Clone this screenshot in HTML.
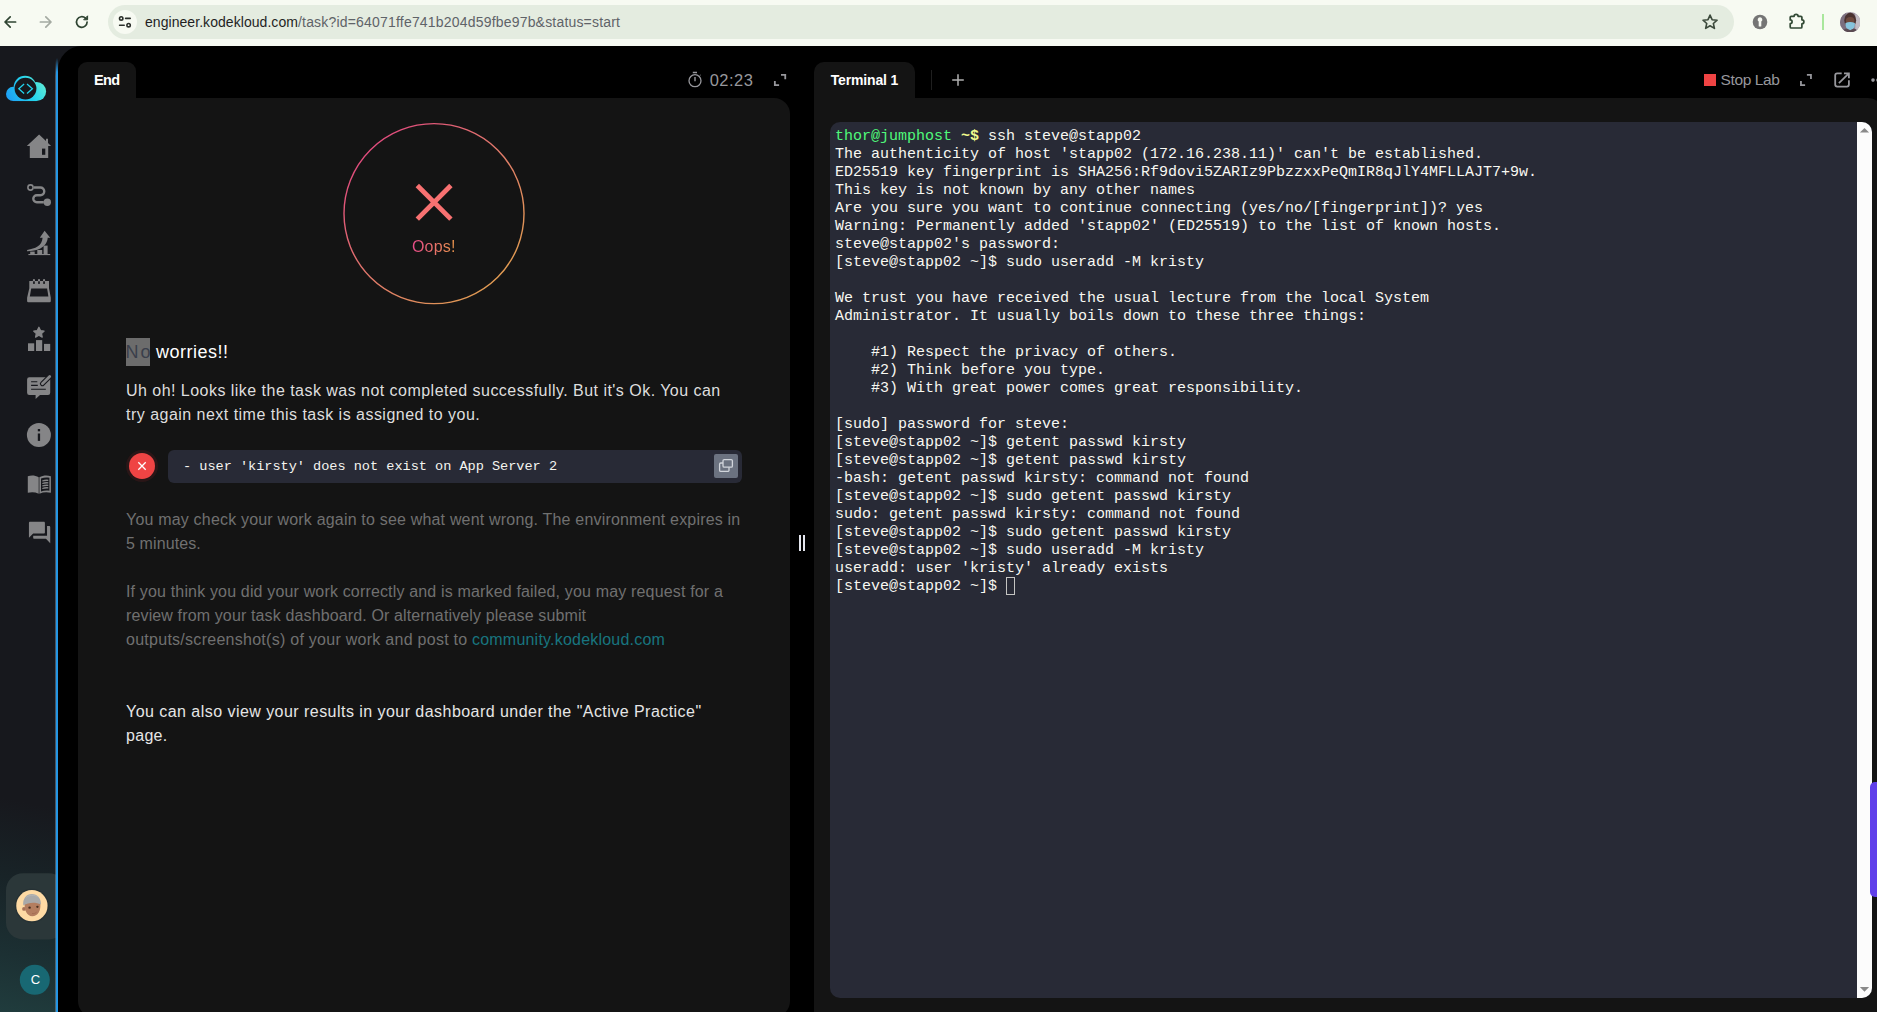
<!DOCTYPE html>
<html>
<head>
<meta charset="utf-8">
<style>
*{box-sizing:border-box;margin:0;padding:0}
html,body{width:1877px;height:1012px;overflow:hidden;background:#000;font-family:"Liberation Sans",sans-serif;}
.abs{position:absolute}
#top{position:absolute;left:0;top:0;width:1877px;height:46px;background:#f7faf2}
#url{position:absolute;left:108px;top:5px;width:1626px;height:34px;border-radius:17px;background:#e4ece0}
#url .ic{position:absolute;left:5px;top:5px;width:24px;height:24px;border-radius:12px;background:#f7faf2}
#urltxt{position:absolute;left:145px;top:14px;font-size:14px;line-height:17px;color:#1f1f1f;white-space:nowrap;letter-spacing:0.055px}
#urltxt span{color:#5f6368;letter-spacing:0.19px}
#side{position:absolute;left:0;top:46px;width:58px;height:966px;background:linear-gradient(192deg,#17181d 0%,#17181d 78%,#182327 86%,#1c3033 94%,#203c3d 100%)}
#main{position:absolute;left:58px;top:46px;width:1819px;height:966px;background:#000;border-top-left-radius:24px}
#blue{position:absolute;left:56px;top:58px;width:2px;height:954px;background:linear-gradient(180deg,rgba(36,150,228,0) 0,#2496e4 14px,#2496e4 100%)}
#lpanel{position:absolute;left:78px;top:98px;width:712px;height:919px;background:#141414;border-radius:0 16px 16px 16px}
#ltab{position:absolute;left:78px;top:62px;width:58px;height:37px;background:#141414;border-radius:9px 9px 0 0}
#ltab span{position:absolute;left:16px;top:9px;font-weight:bold;font-size:14.5px;letter-spacing:-0.67px;line-height:18px;color:#fff}
#rpanel{position:absolute;left:814px;top:98px;width:1070px;height:914px;background:#141414;border-radius:0 16px 0 0}
#rtab{position:absolute;left:814px;top:62px;width:101px;height:37px;background:#141414;border-radius:10px 10px 0 0}
#rtab span{position:absolute;left:16.700px;top:9px;letter-spacing:-0.15px;font-weight:bold;font-size:14px;line-height:18px;color:#fff;white-space:nowrap}
#term{position:absolute;left:830px;top:122px;width:1042px;height:876px;background:#282a36;border-radius:10px;overflow:hidden}
#term pre{position:absolute;left:5px;top:6px;font-family:"Liberation Mono",monospace;font-size:15px;line-height:18px;color:#f8f8f2}
#sb{position:absolute;left:1027px;top:0;width:15px;height:876px;background:#fcfcfc}
.g{color:#50fa7b}.y{color:#f1fa8c;font-weight:bold}
.p{position:absolute;left:126px;white-space:nowrap;font-size:16px;line-height:24px}
</style>
</head>
<body>
<div id="wrap" style="position:absolute;left:0;top:0;width:1877px;height:1012px;overflow:hidden">
<div id="top">
  <div id="url"><div class="ic"></div></div>
  <div id="urltxt">engineer.kodekloud.com<span>/task?id=64071ffe741b204d59fbe97b&amp;status=start</span></div>

  <svg class="abs" style="left:0;top:0" width="108" height="46" viewBox="0 0 108 46" fill="none" stroke-linecap="round" stroke-linejoin="round">
    <path d="M15.600 22H5.200M10.200 16.800L5 22l5.200 5.200" stroke="#2f4432" stroke-width="1.700"/>
    <path d="M40.400 22h10.400M45.800 16.800L51 22l-5.200 5.200" stroke="#a4aaa2" stroke-width="1.700"/>
    <path d="M87.100 22a5.300 5.300 0 1 1-1.600-3.800" stroke="#2f4432" stroke-width="1.700"/>
    <path d="M87.600 16.200v3.600h-3.600z" fill="#2f4432" stroke="#2f4432" stroke-width="1"/>
  </svg>
  <svg class="abs" style="left:113px;top:10px" width="24" height="24" viewBox="0 0 24 24" fill="none" stroke="#2b2f2b" stroke-width="1.6" stroke-linecap="round">
    <circle cx="8.2" cy="8.4" r="1.7"/><path d="M12.6 8.4h4.6"/>
    <circle cx="15.6" cy="15.2" r="1.7"/><path d="M6.6 15.2h4.6"/>
  </svg>
  <svg class="abs" style="left:1700px;top:12px" width="20" height="20" viewBox="0 0 20 20" fill="none" stroke="#3c4a3c" stroke-width="1.600" stroke-linejoin="round">
    <path d="M10.050 3.100l2.050 4.600 5 .5-3.750 3.300 1.100 4.900-4.400-2.600-4.400 2.600 1.100-4.900L3 8.200l5-.5z"/>
  </svg>
  <svg class="abs" style="left:1752px;top:13.800px" width="16" height="16" viewBox="0 0 16 16">
    <circle cx="8" cy="8" r="7.300" fill="#757575"/>
    <path d="M8 3.300a2.350 2.350 0 0 1 1.300 4.300v4.300a.7.700 0 0 1-.7.700H7.400a.7.700 0 0 1-.7-.7V7.600A2.350 2.350 0 0 1 8 3.300z" fill="#f7f9f3"/>
  </svg>
  <svg class="abs" style="left:1786px;top:10px" width="24" height="24" viewBox="1786 10 24 24" fill="none" stroke="#334a36" stroke-width="1.700" stroke-linejoin="round">
    <path d="M1790.200 19.900V17.300a1 1 0 0 1 1-1h2.900a2 2 0 0 1 4 0h2.800a1 1 0 0 1 1 1v2.500a2 2 0 0 1 0 4V27a1 1 0 0 1-1 1h-9.700a1 1 0 0 1-1-1v-3.300a1.900 1.900 0 0 0 0-3.800z"/>
  </svg>
  <div class="abs" style="left:1822px;top:14px;width:2px;height:16px;background:#a9e79c"></div>
  <svg class="abs" style="left:1840px;top:11.700px" width="20.400" height="20.400" viewBox="0 0 20 20">
    <defs><clipPath id="avc"><circle cx="10" cy="10" r="10"/></clipPath></defs>
    <g clip-path="url(#avc)">
      <rect width="20" height="20" fill="#9a8f9c"/>
      <rect x="0" y="0" width="6" height="20" fill="#7a6e7e"/>
      <rect x="15" y="0" width="5" height="20" fill="#c2bcc4"/>
      <ellipse cx="10" cy="8" rx="5.800" ry="7.200" fill="#4a3230"/>
      <ellipse cx="10" cy="8.600" rx="4.200" ry="3.600" fill="#6e4a3e"/>
      <path d="M5.400 10.800c3-1.300 6.200-1.300 9.200 0 .3 4-1.600 6.800-4.600 6.800s-4.900-2.800-4.600-6.800z" fill="#86c4dc"/>
      <path d="M2 20c.8-2.600 3-3.600 4.600-3.800l3.400 1.800 3.400-1.800c1.600.2 3.800 1.200 4.600 3.800z" fill="#5a4a52"/>
    </g>
  </svg>
</div>
<div id="side"></div>
<div class="abs" style="left:58px;top:46px;width:30px;height:30px;background:#17181d"></div><div id="main"></div>
<svg class="abs" style="left:0;top:46px" width="58" height="966" viewBox="0 46 58 966">
  <defs>
    <linearGradient id="lg" x1="8" y1="101" x2="44" y2="80" gradientUnits="userSpaceOnUse">
      <stop offset="0" stop-color="#1e9cf6"/><stop offset="0.55" stop-color="#22d3ee"/><stop offset="1" stop-color="#62ecd4"/>
    </linearGradient>
  </defs>
  <!-- logo -->
  <g fill="url(#lg)"><circle cx="13.1" cy="93.950" r="7.100"/><circle cx="25" cy="87.100" r="11.300"/><circle cx="36.600" cy="91.550" r="9.500"/><rect x="13" y="92" width="23.600" height="9.050"/></g>
  <circle cx="25.500" cy="88.600" r="10.900" fill="#17181d"/>
  <path d="M24.1 83.9l-5.3 4.8 5.3 4.9M27 83.9l5.4 4.8-5.4 4.9" fill="none" stroke="#22d3ee" stroke-width="1.3"/>
  <g fill="#858587">
  <!-- home -->
  <path d="M39.1 134.6l6.9 6.5v-2.3h2v4.2l3.1 2.9h-2.9V158H29.8v-12.1h-3z"/>
  <rect x="42" y="148.6" width="3.3" height="6.2" fill="#17181d"/>
  <!-- route -->
  <circle cx="30.5" cy="187.5" r="2.6" fill="none" stroke="#858587" stroke-width="1.6"/>
  <path d="M33.8 187.5h6.6a3.85 3.85 0 0 1 0 7.7h-3.6a3.5 3.5 0 0 0 0 7h7" fill="none" stroke="#858587" stroke-width="2.4"/>
  <circle cx="47.3" cy="202.2" r="3.7"/>
  <!-- growth -->
  <path d="M44.6 230.8l5.600 7h-2.500c-.2 4.600-3 8.400-7.400 10.600-3.800 1.900-8.400 2.700-13.200 2.800v-1.200c4.200-.6 7.800-1.700 10.400-3.400 3-2 4.800-4.800 5.100-8.800h-2.800z"/>
  <rect x="30.2" y="251.6" width="4.5" height="2.4"/><rect x="37.3" y="250" width="4.9" height="4"/><rect x="43.6" y="245.6" width="4" height="8.4"/>
  <rect x="28.4" y="254" width="21.8" height="1.1"/>
  <!-- calendar -->
  <path d="M29.3 280.9h19.7v7.3l1.8 9.6v3.2a1.2 1.2 0 0 1-1.2 1.2H28.3a1.2 1.2 0 0 1-1.2-1.2v-3.2l2.2-9.6z"/>
  <path d="M31.2 288.4h15.9l1.3 8H29.8z" fill="#17181d"/>
  <rect x="32.900" y="279" width="2.100" height="3" rx="1"/><rect x="37.950" y="279" width="2.100" height="3" rx="1"/><rect x="43" y="279" width="2.100" height="3" rx="1"/><rect x="33.100" y="281.300" width="1.700" height="2.600" fill="#17181d"/><rect x="38.150" y="281.300" width="1.700" height="2.600" fill="#17181d"/><rect x="43.200" y="281.300" width="1.700" height="2.600" fill="#17181d"/>
  <!-- leaderboard -->
  <path d="M38.9 327.300l1.600 3.300 3.600.5-2.600 2.500.7 3.500-3.300-1.800-3.300 1.800.7-3.500-2.600-2.500 3.600-.5z" stroke="#858587" stroke-width="1.300" stroke-linejoin="round"/>
  <rect x="28" y="343.3" width="6.2" height="7.7"/><rect x="36" y="340.1" width="6.2" height="10.9"/><rect x="44" y="343.9" width="6.2" height="7.1"/>
  <!-- review -->
  <path d="M29.3 377.2h18.7a2.2 2.2 0 0 1 2.2 2.2v13.4a2.2 2.2 0 0 1-2.2 2.2H40l-4.4 4v-4h-6.3a2.2 2.2 0 0 1-2.2-2.2v-13.4a2.2 2.2 0 0 1 2.2-2.2z"/>
  <path d="M31.1 381.7h6.2M31.1 385.4h6.7M31.1 389.2h14.7" stroke="#17181d" stroke-width="1.1" fill="none"/>
  <path d="M42.4 383.7l7.3-7.3" stroke="#17181d" stroke-width="5" stroke-linecap="round" fill="none"/>
  <path d="M42.4 383.7l7.3-7.3" stroke="#858587" stroke-width="2.8" stroke-linecap="round" fill="none"/>
  <!-- info -->
  <circle cx="38.9" cy="434.9" r="12"/>
  <rect x="37.8" y="429" width="2.3" height="2.3" fill="#17181d"/><rect x="37.8" y="433.5" width="2.3" height="7.4" fill="#17181d"/>
  <!-- book -->
  <path d="M27.8 476.3c3.600-1.100 7.300-.9 10.900.9v16.500c-3.600-1.700-7.300-1.900-10.900-.9z"/>
  <path d="M39.400 477.200c3.800-1.800 7.600-2 11.500-.9v16.500c-3.900-1-7.700-.8-11.500.9z"/>
  <path d="M41 478.600c2.800-1.100 5.600-1.300 8.400-.8v13c-2.800-.5-5.600-.3-8.400.8z" fill="#17181d"/>
  <path d="M42.300 481c2-.7 4-.9 6-.7M42.300 483.500c2-.7 4-.9 6-.7M42.300 486c2-.7 4-.9 6-.7M42.300 488.500c2-.7 4-.9 6-.7" stroke="#858587" stroke-width="1.300" fill="none"/>
  <!-- forum -->
  <g transform="translate(26.8 519.7) scale(1.065)"><path d="M21 6h-2v9H6v2c0 .55.45 1 1 1h11l4 4V7c0-.55-.45-1-1-1zm-4 6V3c0-.55-.45-1-1-1H3c-.55 0-1 .45-1 1v14l4-4h10c.55 0 1-.45 1-1z"/></g>
  </g>
  <!-- avatar block -->
  <rect x="6" y="873.200" width="60" height="66.200" rx="17" fill="#2b3739"/>
  <circle cx="31.900" cy="905.700" r="17" fill="#263134"/>
  <circle cx="31.900" cy="905.700" r="15.650" fill="#fedaa4"/>
  <circle cx="24" cy="908.900" r="1.900" fill="#a87258"/>
  <path d="M24.600 904.500c0-3 15.700-4 15.700-1 .3 3.400 0 6.600-1.600 9-1.600 2.500-3.800 3.800-6.400 3.800-2.800 0-4.900-1.600-6.200-4.200-1-2.100-1.500-4.600-1.500-7.600z" fill="#b47e60"/>
  <path d="M32 913.500c1.800.3 3.400-.2 4.600-1.300" stroke="#9a6248" stroke-width=".6" fill="none"/>
  <path d="M23.300 905.400c-.9-6.600 3-11.400 8.600-11.400 5.400 0 9.400 4.200 9 10.600-5.200-2.700-12.400-2.300-17.600.8z" fill="#a9a9a9"/>
  <path d="M26 897.500c2.800-2.600 8.600-3.200 12.400-.2" stroke="#b8b8b8" stroke-width=".8" fill="none"/>
  <ellipse cx="29.600" cy="907.700" rx="1.300" ry="1.100" fill="#4a3020"/><ellipse cx="37.400" cy="906.800" rx="1.200" ry="1.100" fill="#4a3020"/>
  <circle cx="34.8" cy="979.8" r="15" fill="#186873"/>
</svg>
<div class="abs" style="left:20.500px;top:969px;width:30px;text-align:center;font-size:13px;line-height:22px;color:#fff">C</div>

<div id="blue"></div><div class="abs" style="left:55px;top:60px;width:1px;height:952px;background:linear-gradient(180deg,rgba(140,160,180,0) 0,rgba(140,160,180,.45) 16px,rgba(140,160,180,.45) 100%)"></div>
<div id="ltab"><span>End</span></div>
<div id="lpanel"></div>

<svg class="abs" style="left:340px;top:119px" width="190" height="190" viewBox="340 119 190 190">
  <defs>
    <linearGradient id="cg" x1="360" y1="140" x2="510" y2="290" gradientUnits="userSpaceOnUse">
      <stop offset="0" stop-color="#e0457f"/><stop offset="0.5" stop-color="#e07a6a"/><stop offset="1" stop-color="#e0a04e"/>
    </linearGradient>
  </defs>
  <circle cx="434" cy="213.6" r="90" fill="none" stroke="url(#cg)" stroke-width="1.4"/>
  <path d="M417.3 185.5l33.6 33.6M450.9 185.5L417.3 219.1" stroke="#f87171" stroke-width="4.8" fill="none"/>
</svg>
<div id="oops" class="abs" style="letter-spacing:0.163px;left:412px;top:235px;font-size:16px;line-height:24px;white-space:nowrap;background:linear-gradient(90deg,#e84a8a,#e8964a);-webkit-background-clip:text;background-clip:text;color:transparent">Oops!</div>

<div class="abs" style="left:126px;top:338px;width:24px;height:28px;background:#6c6c6c"></div>
<div id="hno" class="abs" style="letter-spacing:1.800px;left:125.6px;top:338px;font-size:18px;line-height:28px;color:#3a3f4b;white-space:nowrap">No</div>
<div id="hw" class="abs" style="letter-spacing:0.490px;left:156px;top:338px;font-size:18px;line-height:28px;color:#fff;white-space:nowrap">worries!!</div>

<div id="l1" class="p" style="letter-spacing:0.468px;top:379px;color:#dedede">Uh oh! Looks like the task was not completed successfully. But it's Ok. You can</div>
<div id="l2" class="p" style="letter-spacing:0.477px;top:403px;color:#dedede">try again next time this task is assigned to you.</div>

<div class="abs" style="left:126.300px;top:450.300px;width:31.400px;height:31.400px;border-radius:16px;background:#2a1617"></div>
<div class="abs" style="left:129px;top:453px;width:26px;height:26px;border-radius:13px;background:#ef4444"></div>
<svg class="abs" style="left:129px;top:453px" width="26" height="26" viewBox="0 0 26 26"><path d="M9.300 9.300l7.400 7.400M16.700 9.300l-7.400 7.400" stroke="#fff" stroke-width="1.3" fill="none"/></svg>
<div class="abs" style="left:168px;top:450px;width:574px;height:33px;border-radius:6px;background:#282a36"></div>
<div id="code" class="abs" style="letter-spacing:-0.027px;left:183px;top:458px;font-family:'Liberation Mono',monospace;font-size:13.6px;line-height:18px;color:#f4f4f0;white-space:pre">- user 'kirsty' does not exist on App Server 2</div>
<div class="abs" style="left:714px;top:454px;width:24px;height:24px;border-radius:2px;background:#6b7280"></div>
<svg class="abs" style="left:714px;top:454px" width="24" height="24" viewBox="0 0 24 24" fill="none" stroke="#d1d5db" stroke-width="1.3" stroke-linejoin="round">
  <rect x="9" y="5.6" width="9.4" height="7.6" rx="1.2"/>
  <path d="M9 9H6.8a1.2 1.2 0 0 0-1.2 1.2v6a1.2 1.2 0 0 0 1.2 1.2h7a1.2 1.2 0 0 0 1.2-1.2v-3"/>
</svg>

<div id="g1" class="p" style="letter-spacing:0.187px;top:508px;color:#707070">You may check your work again to see what went wrong. The environment expires in</div>
<div id="g2" class="p" style="letter-spacing:0.109px;top:532px;color:#707070">5 minutes.</div>
<div id="g3" class="p" style="letter-spacing:0.162px;top:580px;color:#707070">If you think you did your work correctly and is marked failed, you may request for a</div>
<div id="g4" class="p" style="letter-spacing:0.134px;top:604px;color:#707070">review from your task dashboard. Or alternatively please submit</div>
<div id="g5" class="p" style="letter-spacing:0.270px;top:628px;color:#707070">outputs/screenshot(s) of your work and post to</div>
<div id="g6" class="p" style="letter-spacing:0.212px;top:628px;left:472px;color:#18747f">community.kodekloud.com</div>
<div id="b1" class="p" style="letter-spacing:0.457px;top:700px;color:#e6e6e6">You can also view your results in your dashboard under the "Active Practice"</div>
<div id="b2" class="p" style="letter-spacing:0.291px;top:724px;color:#e6e6e6">page.</div>
<div id="rtab"><span>Terminal 1</span></div>
<div id="rpanel"></div>

<svg class="abs" style="left:680px;top:62px" width="120" height="36" viewBox="680 62 120 36" fill="none" stroke="#97979c" stroke-width="1.3">
  <circle cx="695" cy="80.7" r="6"/><path d="M695 77v4.200M692.800 72.500h4.200" stroke-width="1.4"/><path d="M699.700 75.800l.9-.8" stroke-width="1"/>
  <path d="M781 74.950h4.250v4.350M774.850 80.900v4.250h4.250" stroke-width="1.8"/>
</svg>
<div id="timer" class="abs" style="letter-spacing:0.46px;left:709.700px;top:70px;font-size:16.5px;line-height:20px;color:#97979c;white-space:nowrap">02:23</div>
<div class="abs" style="left:931px;top:70px;width:1px;height:20px;background:#1f1f1f"></div>
<svg class="abs" style="left:950px;top:72px" width="16" height="16" viewBox="0 0 16 16" stroke="#b0b0b0" stroke-width="1.5" fill="none"><path d="M8 2.2v11.600M2.200 8h11.600"/></svg>
<div class="abs" style="left:1704.3px;top:74.300px;width:11.700px;height:11.700px;background:#ef4444"></div>
<div id="stop" class="abs" style="letter-spacing:-0.4px;left:1720.600px;top:70px;font-size:15.500px;line-height:20px;color:#97979c;white-space:nowrap">Stop Lab</div>
<svg class="abs" style="left:1795px;top:68px" width="82" height="24" viewBox="1795 68 82 24" fill="none" stroke="#97979c" stroke-width="1.8">
  <path d="M1806.900 74.950h4.050v4M1800.950 81v4.050h4.150"/>
  <path d="M1841.700 73.300h-4.500a2 2 0 0 0-2 2v9.300a2 2 0 0 0 2 2h9.700a2 2 0 0 0 2-2v-4.300M1844 73.300h4.900v4.900M1848.900 73.300l-10 9.800"/>
  <circle cx="1873" cy="80.100" r="1.800" fill="#97979c" stroke="none"/><circle cx="1878" cy="80.100" r="1.800" fill="#97979c" stroke="none"/>
</svg>
<div id="term"><pre><span class="g">thor@jumphost</span> <span class="y">~$</span> ssh steve@stapp02
The authenticity of host 'stapp02 (172.16.238.11)' can't be established.
ED25519 key fingerprint is SHA256:Rf9dovi5ZARIz9PbzzxxPeQmIR8qJlY4MFLLAJT7+9w.
This key is not known by any other names
Are you sure you want to continue connecting (yes/no/[fingerprint])? yes
Warning: Permanently added 'stapp02' (ED25519) to the list of known hosts.
steve@stapp02's password: 
[steve@stapp02 ~]$ sudo useradd -M kristy

We trust you have received the usual lecture from the local System
Administrator. It usually boils down to these three things:

    #1) Respect the privacy of others.
    #2) Think before you type.
    #3) With great power comes great responsibility.

[sudo] password for steve: 
[steve@stapp02 ~]$ getent passwd kirsty
[steve@stapp02 ~]$ getent passwd kirsty
-bash: getent passwd kirsty: command not found
[steve@stapp02 ~]$ sudo getent passwd kirsty
sudo: getent passwd kirsty: command not found
[steve@stapp02 ~]$ sudo getent passwd kirsty
[steve@stapp02 ~]$ sudo useradd -M kristy
useradd: user 'kristy' already exists
[steve@stapp02 ~]$ </pre><div id="sb"></div></div>

<svg class="abs" style="left:1857px;top:122px" width="15" height="876" viewBox="0 0 15 876"><path d="M2.900 10.600L7.500 6l4.600 4.600zM2.900 865L7.500 869.700l4.600-4.700z" fill="#8a8a8a"/></svg>
<div class="abs" style="left:1006px;top:577px;width:9px;height:18px;border:1px solid #c4c4c2"></div>
<div class="abs" style="left:1870px;top:782px;width:12px;height:115px;border-radius:5px;background:#6040ea"></div>
<div class="abs" style="left:799px;top:535px;width:2.200px;height:16px;background:#e4e6ee"></div>
<div class="abs" style="left:803px;top:535px;width:2.200px;height:16px;background:#e4e6ee"></div>
</div>
</body>
</html>
